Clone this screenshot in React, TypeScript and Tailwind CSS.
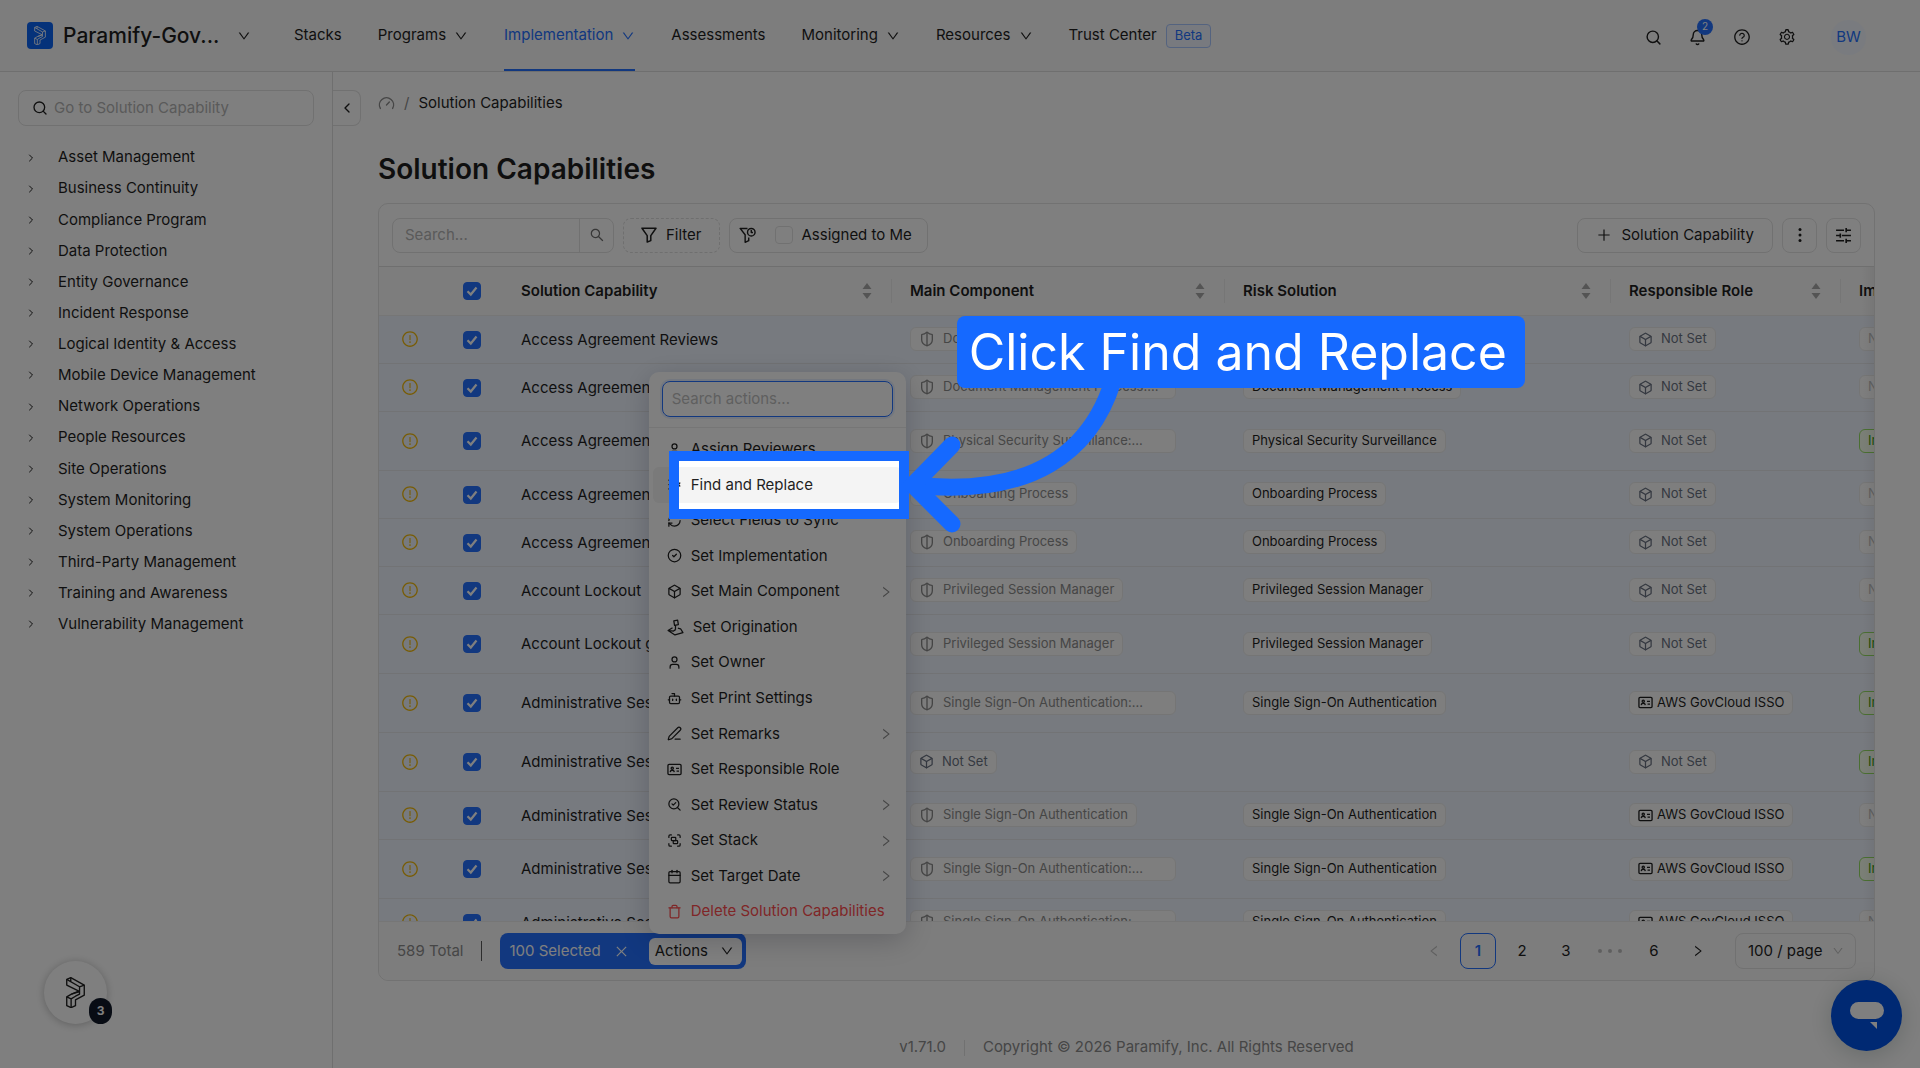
import { ReactNode, useState } from "react";
import {
  Bell,
  Bot,
  Box,
  Calendar,
  ChevronLeft,
  ChevronRight,
  CircleCheck,
  Gauge,
  Group,
  ListX,
  PenLine,
  RefreshCw,
  Search,
  SearchCheck,
  ShieldHalf,
  Trash,
  User,
} from "lucide-react";
import {
  AiOutlineClose,
  AiOutlineDown,
  AiOutlineExclamationCircle,
  AiOutlineLeft,
  AiOutlinePlus,
  AiOutlineQuestionCircle,
  AiOutlineRight,
  AiOutlineSearch,
  AiOutlineSetting,
} from "react-icons/ai";

interface RowType {
  name: string;
  main: string;
  risk: string;
  role: string;
  implemented: boolean;
  tall?: boolean;
}

interface ActionType {
  label: string;
  icon: ReactNode;
  submenu?: boolean;
  danger?: boolean;
}

const categories = [
  "Asset Management",
  "Business Continuity",
  "Compliance Program",
  "Data Protection",
  "Entity Governance",
  "Incident Response",
  "Logical Identity & Access",
  "Mobile Device Management",
  "Network Operations",
  "People Resources",
  "Site Operations",
  "System Monitoring",
  "System Operations",
  "Third-Party Management",
  "Training and Awareness",
  "Vulnerability Management",
];

const navItems = [
  { label: "Stacks" },
  { label: "Programs", menu: true },
  { label: "Implementation", menu: true, active: true },
  { label: "Assessments" },
  { label: "Monitoring", menu: true },
  { label: "Resources", menu: true },
];

const SSO = "Single Sign-On Authentication";
const ISSO = "AWS GovCloud ISSO";

const rows: RowType[] = [
  { name: "Access Agreement Reviews", main: "Document Management Process:...", risk: "Document Management Process", role: "", implemented: false },
  { name: "Access Agreement", main: "Document Management Process:...", risk: "Document Management Process", role: "", implemented: false },
  { name: "Access Agreement", main: "Physical Security Surveillance:...", risk: "Physical Security Surveillance", role: "", implemented: true, tall: true },
  { name: "Access Agreement", main: "Onboarding Process", risk: "Onboarding Process", role: "", implemented: false },
  { name: "Access Agreement", main: "Onboarding Process", risk: "Onboarding Process", role: "", implemented: false },
  { name: "Account Lockout", main: "Privileged Session Manager", risk: "Privileged Session Manager", role: "", implemented: false },
  { name: "Account Lockout group", main: "Privileged Session Manager", risk: "Privileged Session Manager", role: "", implemented: true, tall: true },
  { name: "Administrative Session", main: SSO + ":...", risk: SSO, role: ISSO, implemented: true, tall: true },
  { name: "Administrative Session", main: "", risk: "", role: "", implemented: true, tall: true },
  { name: "Administrative Session", main: SSO, risk: SSO, role: ISSO, implemented: false },
  { name: "Administrative Session", main: SSO + ":...", risk: SSO, role: ISSO, implemented: true, tall: true },
  { name: "Administrative Session", main: SSO + ":...", risk: SSO, role: ISSO, implemented: false },
];

const IdIcon = () => (
  <svg viewBox="0 0 16 16" className="h-[15px] w-[15px] shrink-0" fill="none" stroke="currentColor" strokeWidth="1.4">
    <rect x="1" y="2.5" width="14" height="11" rx="1.2" />
    <circle cx="5.6" cy="6.6" r="1.2" />
    <path d="M3.4 10.8c.2-1.3 1.1-2 2.2-2s2 .7 2.2 2M9.6 6.8h3.2M10.2 9.8h2.6" />
  </svg>
);

const OriginIcon = () => (
  <svg viewBox="0 0 16 16" className="h-[17px] w-[17px] shrink-0" fill="none" stroke="currentColor" strokeWidth="1.2" strokeLinejoin="round">
    <path d="M6.4 1.8 10 1l.7 4.2-3.6.8zM8 6v4M5.2 8.2 1 10.8 7.5 15l7.5-2.2-2.2-3.6-2.6-.6M1 10.8l5.2.6L8 10" />
  </svg>
);

const SavedFilterIcon = () => (
  <svg viewBox="0 0 18 18" className="h-[17px] w-[17px] shrink-0" fill="none" stroke="currentColor" strokeWidth="1.5" strokeLinejoin="round">
    <path d="M9 1.5H1.2l5.3 6.7v8l3.8-1.7v-3.3" />
    <circle cx="13" cy="5.5" r="4" />
    <path d="M13 3.2v2.6h1.8" />
  </svg>
);

const FilterIcon = () => (
  <svg viewBox="0 0 16 16" className="h-4 w-4" fill="none" stroke="currentColor" strokeWidth="1.5" strokeLinejoin="round">
    <path d="M1 1.2h14L9.8 8.6v5L6.2 15V8.6z" />
  </svg>
);

const TuneIcon = () => (
  <svg viewBox="0 0 16 16" className="h-[17px] w-[17px]" fill="none" stroke="currentColor" strokeWidth="1.5">
    <path d="M1 3h7.5M10.5 3H15M10.5 1v4M1 8h3.5M6.5 8H15M5 6v4M1 13h7.5M10.5 13H15M10.5 11v4" />
  </svg>
);

const Mark = ({ className }: { className: string }) => (
  <svg viewBox="0 0 56 92" className={className} fill="none" stroke="currentColor" strokeWidth="4" strokeLinejoin="round">
    <path d="M2 7 14 2l40 22v30L28 68v17l-13 6-13-6V59l14-8 22-9L2 24z" />
    <path d="M2 7l38 22 14-5M40 29v14l-24 8M2 59l13 6 13-8 12-6V43M15 65v26M14 2v11" />
  </svg>
);

const actions: ActionType[] = [
  { label: "Assign Reviewers", icon: <User size={15} /> },
  { label: "Find and Replace", icon: <ListX size={15} /> },
  { label: "Select Fields to Sync", icon: <RefreshCw size={15} /> },
  { label: "Set Implementation", icon: <CircleCheck size={15} /> },
  { label: "Set Main Component", icon: <Box size={15} />, submenu: true },
  { label: "Set Origination", icon: <OriginIcon /> },
  { label: "Set Owner", icon: <User size={15} /> },
  { label: "Set Print Settings", icon: <Bot size={15} /> },
  { label: "Set Remarks", icon: <PenLine size={15} />, submenu: true },
  { label: "Set Responsible Role", icon: <IdIcon /> },
  { label: "Set Review Status", icon: <SearchCheck size={15} />, submenu: true },
  { label: "Set Stack", icon: <Group size={15} />, submenu: true },
  { label: "Set Target Date", icon: <Calendar size={15} />, submenu: true },
  { label: "Delete Solution Capabilities", icon: <Trash size={15} />, danger: true },
];

const Checkbox = ({ label, checked, onChange }: { label: string; checked: boolean; onChange: () => void }) => (
  <span className="relative inline-flex h-[18px] w-[18px] align-middle">
    <input
      type="checkbox"
      aria-label={label}
      checked={checked}
      onChange={onChange}
      className="h-[18px] w-[18px] appearance-none rounded border border-[#e2e2e2] bg-white checked:border-[#2470ff] checked:bg-[#2470ff]"
    />
    {checked && (
      <svg viewBox="0 0 18 18" className="pointer-events-none absolute inset-0" fill="none" stroke="white" strokeWidth="2.2">
        <path d="M4.5 9.2l3.3 3.3 5.7-7" />
      </svg>
    )}
  </span>
);

const Sorter = () => (
  <svg viewBox="0 0 10 18" className="h-[18px] w-[10px] shrink-0" fill="#a9a9a9">
    <path d="M5 1l4.500 6h-9zM5 17l4.500-6h-9z" />
  </svg>
);

const HeadCell = ({ title }: { title: string }) => (
  <th className="relative pr-5 pl-[18px] text-left font-semibold">
    <div className="flex items-center justify-between">
      {title}
      <Sorter />
    </div>
    <span className="absolute top-3 right-0 h-6 w-px bg-[#ececec]" />
  </th>
);

const tagClass =
  "inline-flex h-6 items-center rounded-md border border-[#ebebeb] bg-[#fdfdfd] align-middle text-[13px] whitespace-nowrap";

const NotSet = () => (
  <span className={tagClass + " gap-2 px-2 text-gray-500"}>
    <Box size={15} />
    Not Set
  </span>
);

const Row = ({ row }: { row: RowType }) => {
  const [checked, setChecked] = useState(true);
  const cut = row.main.endsWith("...");
  return (
    <tr className={(row.tall ? "h-[59px]" : "h-12") + " border-b border-[#e4e6ea] bg-[#eff5ff]"}>
      <td>
        <AiOutlineExclamationCircle className="mx-auto text-[18px] text-[#f0b90b]" />
      </td>
      <td className="text-center">
        <Checkbox label={row.name} checked={checked} onChange={() => setChecked(!checked)} />
      </td>
      <td className="px-[18px] pt-[2px] whitespace-nowrap">{row.name}</td>
      <td className="px-[18px]">
        {row.main ? (
          <span className={tagClass + " gap-2 px-2 text-[#8c8c8c] " + (cut ? "w-[266px]" : "")}>
            <ShieldHalf size={16} />
            {row.main}
          </span>
        ) : (
          <NotSet />
        )}
      </td>
      <td className="px-[18px]">{row.risk && <span className={tagClass + " px-2"}>{row.risk}</span>}</td>
      <td className="px-[18px]">
        {row.role ? (
          <span className={tagClass + " gap-1 px-2"}>
            <IdIcon />
            {row.role}
          </span>
        ) : (
          <NotSet />
        )}
      </td>
      <td className="px-[18px]">
        {row.implemented ? (
          <span className="inline-flex h-6 items-center rounded-md border border-[#95de64] bg-[#f6ffed] px-2 align-middle text-[13px] text-[#389e0d]">
            Implemented
          </span>
        ) : (
          <span className={tagClass + " px-2 text-[#bfbfbf]"}>Not Set</span>
        )}
      </td>
    </tr>
  );
};

// Spotlight frame, its big shadow dims the rest of the page
const Guide = () => (
  <div className="pointer-events-none absolute -top-4 left-4 z-10 h-[68px] w-[240px] border-[10px] border-[#1569ff] shadow-[0_0_0_3000px_rgba(0,0,0,0.5)]">
    <svg viewBox="0 0 240 160" className="absolute -top-[87px] left-[220px] h-[160px] w-[240px]" fill="none" stroke="#1569ff" strokeWidth="17" strokeLinecap="round">
      <path d="M214 7C192 77 134 124 14 111" />
      <path d="M53 71 14 111l39 39" />
    </svg>
    <div className="absolute -top-[145px] left-[278px] flex h-[72px] w-[568px] items-center rounded-lg bg-[#1569ff] px-3 text-[50px] whitespace-nowrap text-white">
      Click Find and Replace
    </div>
  </div>
);

const ActionsMenu = () => (
  <div className="absolute bottom-full left-0 z-20 mb-1 w-[257px] rounded-[10px] bg-white shadow-[0_6px_28px_rgba(0,0,30,0.2)]">
    <div className="border-b border-[#ececec] px-[13px] pt-[9px] pb-[10px]">
      <input
        aria-label="Search actions"
        placeholder="Search actions..."
        className="h-9 w-full rounded-lg border border-[#2470ff] px-[9px] shadow-[0_0_0_2px_rgba(5,100,255,0.1)] outline-none placeholder:text-[#bfbfbf]"
      />
    </div>
    <ul className="grid h-[506px] auto-rows-fr p-1">
      {actions.map((action) => {
        const current = action.label === "Find and Replace";
        return (
          <li key={action.label} className="relative">
            <button
              className={
                "flex h-full w-full items-center gap-[9px] rounded-md pr-[9px] pl-[14px] whitespace-nowrap " +
                (current ? "bg-[#f4f4f4] " : "") +
                (action.danger ? "text-[#ff4d4f]" : "")
              }
            >
              {action.icon}
              {action.label}
              {action.submenu && <AiOutlineRight className="ml-auto text-sm text-[#8c8c8c]" />}
            </button>
            {current && <Guide />}
          </li>
        );
      })}
    </ul>
  </div>
);

const iconButton = "flex h-[35px] w-[35px] items-center justify-center rounded-lg border border-[#e4e4e4] bg-white";
const pageButton = "flex h-9 w-9 items-center justify-center rounded-lg";

const App = () => {
  const [assigned, setAssigned] = useState(false);
  const [allChecked, setAllChecked] = useState(true);

  return (
    <div className="relative flex h-screen flex-col overflow-hidden bg-white font-['Inter',sans-serif] text-[15px] text-[#1f1f1f]">
      <header className="flex h-[72px] shrink-0 items-center border-b border-[#dedede] bg-[#fafafa] pr-[54px] pl-[27px]">
        <button className="flex w-[267px] items-center text-[21px] font-medium">
          <span className="mr-[10px] flex h-[27px] w-[26px] items-center justify-center rounded bg-[#0a64f5] text-white">
            <Mark className="h-[19px] w-3" />
          </span>
          Paramify-Gov...
          <AiOutlineDown className="ml-[18px] text-sm" />
        </button>
        <nav className="flex h-full items-center gap-9">
          {navItems.map((item) => (
            <a
              key={item.label}
              href="#"
              className={
                "flex h-full items-center gap-2 border-t-2 border-b-2 border-t-transparent " +
                (item.active ? "border-b-[#2470ff] text-[#2470ff]" : "border-b-transparent")
              }
            >
              {item.label}
              {item.menu && <AiOutlineDown className="text-sm" />}
            </a>
          ))}
          <a href="#" className="flex items-center gap-[9px]">
            Trust Center
            <span className="flex h-6 items-center rounded border border-[#a9c6ff] bg-[#f0f5ff] px-2 text-[13px] text-[#2470ff]">Beta</span>
          </a>
        </nav>
        <div className="ml-auto flex items-center gap-[27px] pt-[3px]">
          <button aria-label="Search">
            <Search size={17} strokeWidth={2} />
          </button>
          <button aria-label="Notifications" className="relative">
            <Bell size={17} strokeWidth={2} />
            <span className="absolute -top-[10px] left-2 flex h-4 w-4 items-center justify-center rounded-full bg-[#2470ff] text-[10px] text-white">
              2
            </span>
          </button>
          <button aria-label="Help">
            <AiOutlineQuestionCircle size={18} />
          </button>
          <button aria-label="Settings">
            <AiOutlineSetting size={18} />
          </button>
          <button className="ml-2 flex h-[35px] w-[35px] items-center justify-center rounded-full bg-[#f2f7ff] text-[#2470ff]">BW</button>
        </div>
      </header>

      <div className="flex min-h-0 flex-1">
        <aside className="w-[333px] shrink-0 border-r border-[#dedede] pt-[18px] pr-[18px] pl-[18px]">
          <label className="flex h-9 items-center gap-[6px] rounded-lg border border-[#e2e2e2] px-[13px]">
            <Search size={16} strokeWidth={2} />
            <input
              aria-label="Go to Solution Capability"
              placeholder="Go to Solution Capability"
              className="min-w-0 flex-1 outline-none placeholder:text-[#b4b4b4]"
            />
          </label>
          <ul className="mt-4 grid h-[498px] auto-rows-fr">
            {categories.map((category) => (
              <li key={category} className="flex items-center">
                <button className="flex items-center pl-[7px]">
                  <ChevronRight size={12} strokeWidth={2} className="mr-[21px]" />
                  {category}
                </button>
              </li>
            ))}
          </ul>
        </aside>

        <main className="relative flex min-w-0 flex-1 flex-col px-[45px] pt-[18px]">
          <button
            aria-label="Collapse sidebar"
            className="absolute top-[18px] left-0 flex h-9 w-7 items-center justify-center rounded-r-lg border border-l-0 border-[#e2e2e2]"
          >
            <ChevronLeft size={16} strokeWidth={2} />
          </button>
          <div className="flex h-[26px] items-center gap-[9px]">
            <Gauge size={17} strokeWidth={2} className="text-[#8c8c8c]" />
            <span className="text-[#8c8c8c]">/</span>
            <a href="#">Solution Capabilities</a>
          </div>
          <h1 className="mt-[33px] mb-[14px] text-[28px] leading-10 font-semibold">Solution Capabilities</h1>

          <section className="flex min-h-0 flex-1 flex-col rounded-[10px] border border-[#e4e4e4]">
            <div className="flex h-[63px] shrink-0 items-center gap-[9px] border-b border-[#dedede] px-[13px]">
              <div className="flex h-[35px] w-[222px] rounded-lg border border-[#e2e2e2]">
                <input
                  aria-label="Search"
                  placeholder="Search..."
                  className="w-[187px] min-w-0 border-r border-[#e2e2e2] px-3 outline-none placeholder:text-[#b4b4b4]"
                />
                <button aria-label="Run search" className="flex flex-1 items-center justify-center text-[#6e6e6e]">
                  <AiOutlineSearch size={16} />
                </button>
              </div>
              <button className="flex h-[35px] items-center gap-[9px] rounded-lg border border-dashed border-[#dedede] px-[17px]">
                <FilterIcon />
                Filter
              </button>
              <label className="flex h-[35px] items-center rounded-lg border border-[#e2e2e2] px-[9px]">
                <span className="mr-[19px]">
                  <SavedFilterIcon />
                </span>
                <Checkbox label="Assigned to Me" checked={assigned} onChange={() => setAssigned(!assigned)} />
                <span className="pr-[6px] pl-[9px]">Assigned to Me</span>
              </label>
              <button className="ml-auto flex h-[35px] items-center gap-[9px] rounded-lg border border-[#e2e2e2] px-[18px]">
                <AiOutlinePlus size={16} />
                Solution Capability
              </button>
              <button aria-label="More" className={iconButton}>
                <svg viewBox="0 0 16 16" className="h-4 w-4" fill="currentColor">
                  <circle cx="8" cy="2.5" r="1.5" />
                  <circle cx="8" cy="8" r="1.5" />
                  <circle cx="8" cy="13.5" r="1.5" />
                </svg>
              </button>
              <button aria-label="Table settings" className={iconButton}>
                <TuneIcon />
              </button>
            </div>

            <div className="relative min-h-0 flex-1 overflow-hidden">
              <table className="w-[1700px] table-fixed border-collapse">
                <colgroup>
                  <col className="w-[62px]" />
                  <col className="w-[62px]" />
                  <col className="w-[389px]" />
                  <col className="w-[333px]" />
                  <col className="w-[386px]" />
                  <col className="w-[230px]" />
                  <col />
                </colgroup>
                <thead>
                  <tr className="h-12 border-b border-[#ececec] bg-[#fafafa]">
                    <th />
                    <th className="text-center">
                      <Checkbox label="Select all" checked={allChecked} onChange={() => setAllChecked(!allChecked)} />
                    </th>
                    <HeadCell title="Solution Capability" />
                    <HeadCell title="Main Component" />
                    <HeadCell title="Risk Solution" />
                    <HeadCell title="Responsible Role" />
                    <HeadCell title="Implementation" />
                  </tr>
                </thead>
                <tbody>
                  {rows.map((row, i) => (
                    <Row key={i} row={row} />
                  ))}
                </tbody>
              </table>
              <div className="pointer-events-none absolute inset-y-0 right-0 w-3 bg-linear-to-l from-black/5 to-transparent" />
            </div>

            <div className="flex h-[59px] shrink-0 items-center rounded-b-[10px] border-t border-[#ececec] bg-[#fafafa] px-[18px]">
              <span className="text-[#8c8c8c]">589 Total</span>
              <span className="mx-[18px] h-5 w-px bg-[#5a5a5a]" />
              <div className="flex h-9 items-center rounded-lg bg-[#2470ff] pr-1 pl-[9px] text-white">
                100 Selected
                <button aria-label="Clear selection" className="mr-5 ml-[13px]">
                  <AiOutlineClose size={15} />
                </button>
                <div className="relative text-[#1f1f1f]">
                  <button className="flex h-[27px] items-center gap-3 rounded-md bg-white pr-2 pl-[6px]">
                    Actions
                    <AiOutlineDown className="text-sm" />
                  </button>
                  <ActionsMenu />
                </div>
              </div>
              <div className="ml-auto flex items-center gap-2">
                <button aria-label="Previous page" className={pageButton + " text-[#bfbfbf]"}>
                  <AiOutlineLeft className="text-sm" />
                </button>
                <button className={pageButton + " border border-[#2470ff] font-semibold text-[#2470ff]"}>1</button>
                <button className={pageButton}>2</button>
                <button className={pageButton}>3</button>
                <span className={pageButton + " gap-[6px]"}>
                  <i className="h-1 w-1 rounded-full bg-[#bfbfbf]" />
                  <i className="h-1 w-1 rounded-full bg-[#bfbfbf]" />
                  <i className="h-1 w-1 rounded-full bg-[#bfbfbf]" />
                </span>
                <button className={pageButton}>6</button>
                <button aria-label="Next page" className={pageButton}>
                  <AiOutlineRight className="text-sm" />
                </button>
                <div className="relative ml-[11px]">
                  <select aria-label="Rows per page" className="h-9 w-[121px] appearance-none rounded-lg border border-[#e2e2e2] bg-transparent pl-3">
                    <option>100 / page</option>
                    <option>50 / page</option>
                  </select>
                  <AiOutlineDown className="pointer-events-none absolute top-3 right-3 text-xs text-[#bfbfbf]" />
                </div>
              </div>
            </div>
          </section>

          <footer className="flex h-[87px] shrink-0 items-center justify-center gap-[18px] pt-[46px] text-[#8c8c8c]">
            <span>v1.71.0</span>
            <span className="h-4 w-px bg-[#e2e2e2]" />
            <span>Copyright © 2026 Paramify, Inc. All Rights Reserved</span>
          </footer>
        </main>
      </div>

      <button
        aria-label="Getting started"
        className="absolute bottom-11 left-11 flex h-[63px] w-[63px] items-center justify-center rounded-full bg-white shadow-[0_1px_8px_rgba(0,0,0,0.25)]"
      >
        <Mark className="h-[31px] w-[19px]" />
        <span className="absolute -right-[5px] bottom-0 flex h-[26px] w-[23px] items-center justify-center rounded-full bg-[#101828] text-xs font-bold text-white">
          3
        </span>
      </button>
      <button
        aria-label="Open chat"
        className="absolute right-[18px] bottom-[17px] flex h-[71px] w-[71px] items-center justify-center rounded-full bg-[#0052e6] shadow-[0_4px_24px_rgba(0,40,30,0.2)]"
      >
        <svg viewBox="0 0 34 28" className="h-7 w-[34px]" fill="white">
          <rect x="0" y="0" width="34" height="17" rx="8.5" />
          <path d="M20 20h7v7z" />
        </svg>
      </button>
    </div>
  );
};

export default App;
